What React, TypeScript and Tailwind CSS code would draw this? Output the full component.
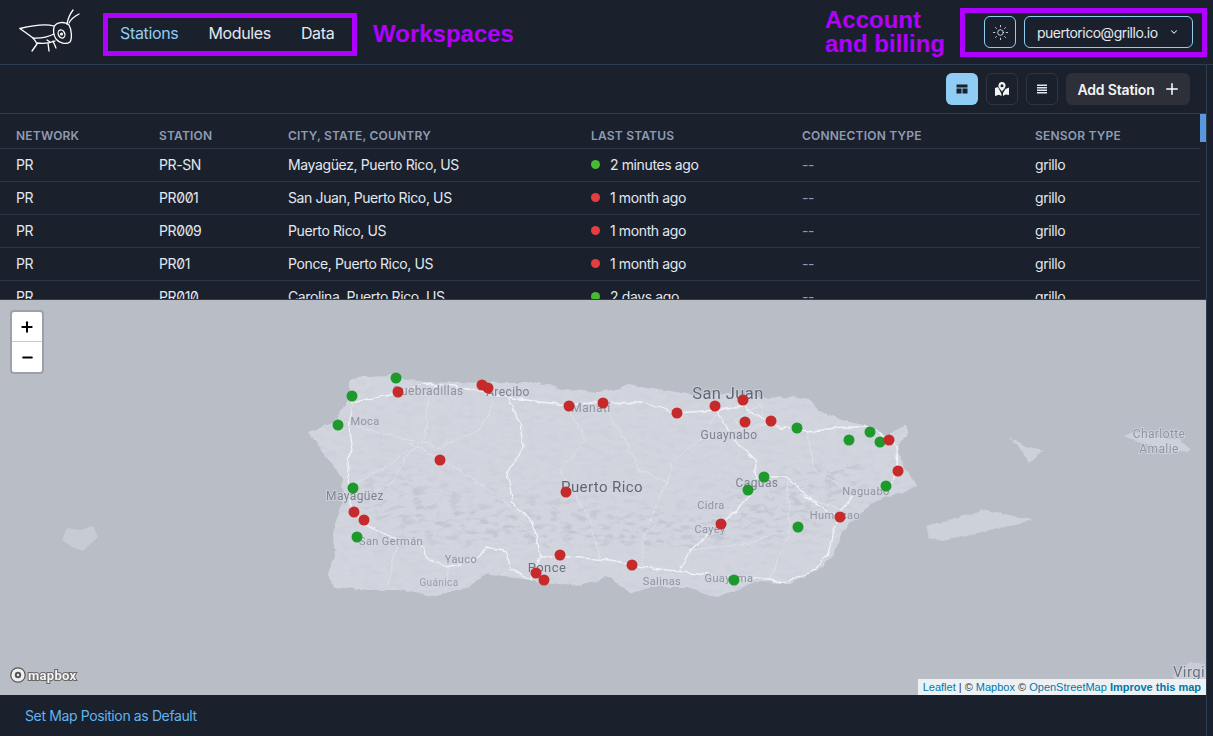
import { Plus, ChevronDown, Sun, Minus } from "lucide-react";

const rows = [
  { net: "PR", station: "PR-SN", city: "Mayagüez, Puerto Rico, US", status: "2 minutes ago", ok: true },
  { net: "PR", station: "PR001", city: "San Juan, Puerto Rico, US", status: "1 month ago", ok: false },
  { net: "PR", station: "PR009", city: "Puerto Rico, US", status: "1 month ago", ok: false },
  { net: "PR", station: "PR01", city: "Ponce, Puerto Rico, US", status: "1 month ago", ok: false },
  { net: "PR", station: "PR010", city: "Carolina, Puerto Rico, US", status: "2 days ago", ok: true },
];

const island =
  "M350 382 L358 377 L367 376 L393 375 L412 380 L433 383 L458 382 L480 383 L513 383 L540 383 L567 390 L600 392 L620 388 L627 384 L653 388 L693 395 L730 393 L767 398 L790 397 L810 400 L823 413 L845 421 L863 425 L887 435 L907 425 L908 433 L897 447 L903 467 L917 485 L903 493 L883 497 L863 510 L843 530 L833 557 L823 567 L790 583 L757 582 L735 590 L717 597 L687 587 L653 587 L630 593 L610 577 L577 587 L533 580 L507 577 L487 573 L470 587 L433 597 L400 590 L367 590 L333 587 L328 573 L335 557 L333 533 L343 503 L342 477 L327 457 L308 432 L333 423 L350 397 Z";

const mainRoads = [
  "M352 403 L397 392 L423 384 L453 386 L487 393 L507 397 L540 402 L567 405 L600 402 L643 403 L677 413 L717 410 L743 407 L780 427 L807 432 L843 427 L873 427 L897 447 L898 470 L887 487 L853 495 L842 510 L833 533 L827 557 L810 573 L783 582 L757 578 L720 577 L683 572 L643 567 L610 560 L567 557 L542 557 L530 580 L510 568 L507 552 L487 548 L477 560 L447 567 L428 558 L420 543 L397 540 L363 523 L350 507 L350 487 L347 463 L352 450 L349 433 L352 403",
  "M717 410 L733 440 L755 460 L757 477 L748 498 L723 523 L690 550 L680 570",
  "M757 477 L787 477 L807 497 L837 517",
  "M507 397 L520 423 L523 447 L507 473 L513 503 L533 523 L542 557",
];

const minorRoads = [
  "M350 423 L380 433 L440 447 L480 430 L493 403",
  "M410 443 L460 470 L493 493 L533 523",
  "M717 413 L700 440 L673 460 L667 483 L653 513 L643 543 L643 567",
  "M360 500 L395 480 L412 447",
  "M567 405 L585 440 L560 470 L590 520 L600 558",
  "M600 402 L625 440 L640 470 L667 483",
  "M700 440 L760 425 L780 427",
  "M787 477 L790 530 L770 580",
  "M842 510 L800 495 M807 432 L815 470 L853 495",
  "M397 540 L388 585 M450 567 L445 590",
  "M690 550 L740 545 L790 530",
  "M735 420 L760 405 L765 425 L745 432 L735 420",
  "M350 403 L370 383 M430 385 L425 440 L380 470 L350 487",
];

const labels: [string, number, number, number, string][] = [
  ["Quebradillas", 428, 395, 12, "#8e94a2"],
  ["Arecibo", 508, 396, 12, "#7d8391"],
  ["Manatí", 591, 412, 12, "#8e94a2"],
  ["San Juan", 728, 399, 16.5, "#5f6676"],
  ["Moca", 365, 425, 11, "#8e94a2"],
  ["Guaynabo", 729, 439, 12, "#7d8391"],
  ["Mayagüez", 355, 500, 12, "#7d8391"],
  ["Puerto Rico", 602, 492, 15, "#5f6676"],
  ["Caguas", 757, 487, 12, "#7d8391"],
  ["Naguabo", 866, 495, 11, "#8e94a2"],
  ["Cidra", 711, 509, 11, "#8e94a2"],
  ["Humacao", 835, 519, 11, "#8e94a2"],
  ["Cayey", 710, 533, 11, "#8e94a2"],
  ["San Germán", 391, 545, 11, "#8e94a2"],
  ["Yauco", 461, 563, 11, "#8e94a2"],
  ["Ponce", 547, 572, 13, "#6b7280"],
  ["Guánica", 439, 586, 10, "#9aa0ac"],
  ["Salinas", 662, 585, 11, "#8e94a2"],
  ["Guayama", 729, 582, 11, "#8e94a2"],
  ["Charlotte", 1159, 438, 12, "#8e94a2"],
  ["Amalie", 1159, 453, 12, "#8e94a2"],
  ["Virgi", 1189, 677, 15, "#6b7280"],
];

const green = [
  [396, 378], [352, 396], [338, 425], [353, 488], [357, 537], [797, 428], [849, 440], [870, 432],
  [880, 442], [886, 486], [764, 477], [748, 490], [798, 527], [734, 580],
];
const red = [
  [398, 392], [482, 385], [488, 388], [569, 406], [603, 403], [440, 460], [566, 492], [354, 512],
  [364, 520], [560, 555], [536, 573], [544, 580], [632, 565], [677, 413], [715, 406], [743, 400],
  [745, 422], [771, 421], [889, 440], [898, 471], [840, 517], [721, 524],
];

function Logo() {
  return (
    <svg className="overflow-visible" width="62" height="44" viewBox="18 10 62 44" fill="none" stroke="#fff" strokeWidth="1.3" strokeLinecap="round" strokeLinejoin="round">
      <path d="M20 28.5 C30 26 44 23 54 26" />
      <path d="M20 28.5 C25 32 29 35 33 38 C40 38.5 48 37 54 34" />
      <path d="M54 27 C56 22 65 21 69 25 C72 30 72 39 70 42 C66 45 59 43 56 39 C54 36 53 31 54 27 Z" />
      <ellipse cx="61.5" cy="34" rx="3.2" ry="4.2" transform="rotate(-25 61.5 34)" />
      <circle cx="61.5" cy="34" r="0.9" />
      <path d="M67 24 C68 18 70 14 73 10 M69 23 C71 19 75 16 79 14" />
      <path d="M33 38 C35 40 36 42 37 44 L32 51 M37 43 C43 44 50 43 55 41 M48 43 L49 51 M53 41 L56 48 M47 40 L50 42" />
    </svg>
  );
}

function MapIcon() {
  return (
    <svg width="16" height="16" viewBox="0 0 16 16" fill="#f3f4f6">
      <path d="M8 1 C5.8 1 4.4 2.7 4.4 4.6 C4.4 6.6 6.6 9 8 10.4 C9.4 9 11.6 6.6 11.6 4.6 C11.6 2.7 10.2 1 8 1 Z M8 3.2 A1.5 1.5 0 1 1 8 6.2 A1.5 1.5 0 0 1 8 3.2 Z" fillRule="evenodd" />
      <path d="M1 7 L4 6 L7.5 13 L7.5 15 L5 13.8 L1 15 Z" />
      <path d="M9 15 L9 12 L11.5 8 L15 6.5 L15 14 L11.5 13.5 Z" />
    </svg>
  );
}

function LeafletMap() {
  return (
    <div className="relative flex-1 overflow-hidden bg-[#b9bdc6]">
      <svg className="absolute left-0 top-[-300px]" width="1206" height="736" viewBox="0 0 1206 736">
        <defs>
          <filter id="terrain" x="0" y="0" width="100%" height="100%">
            <feTurbulence type="fractalNoise" baseFrequency="0.08 0.2" numOctaves="5" seed="11" />
            <feColorMatrix values="0 0 0 0 0.50  0 0 0 0 0.53  0 0 0 0 0.60  4 0 0 0 -1.95" />
          </filter>
          <filter id="coast" x="-5%" y="-5%" width="110%" height="110%">
            <feTurbulence type="fractalNoise" baseFrequency="0.09" numOctaves="3" seed="4" result="n" />
            <feDisplacementMap in="SourceGraphic" in2="n" scale="6" xChannelSelector="R" yChannelSelector="G" />
          </filter>
          <filter id="wide">
            <feGaussianBlur stdDeviation="14" />
          </filter>
          <mask id="relief" maskUnits="userSpaceOnUse" x="290" y="360" width="640" height="250">
            <rect x="290" y="360" width="640" height="250" fill="#303030" />
            <path d="M370 490 L470 525 L600 530 L700 540 L790 505 L860 470" fill="none" stroke="#ccc" strokeWidth="46" filter="url(#wide)" />
          </mask>
          <clipPath id="pr">
            <path d={island} />
          </clipPath>
        </defs>
        <g filter="url(#coast)">
          <path d={island} fill="#d2d5de" />
          <g clipPath="url(#pr)">
            <g mask="url(#relief)">
              <rect x="290" y="360" width="640" height="250" filter="url(#terrain)" />
            </g>
            <g fill="none" stroke="#e6e8ed" strokeWidth="0.8" opacity="0.75">
              {minorRoads.map((d) => (
                <path key={d} d={d} />
              ))}
            </g>
            <g fill="none" stroke="#f1f2f5" strokeWidth="1.3" strokeLinejoin="round">
              {mainRoads.map((d) => (
                <path key={d} d={d} />
              ))}
            </g>
          </g>
          <path d="M925 527 L960 517 L987 510 L1013 517 L1035 520 L1010 525 L977 533 L943 540 L928 537 Z" fill="#cdd1da" />
          <path d="M1010 438 L1025 446 L1043 450 L1030 462 L1017 447 Z" fill="#cdd1da" />
          <path d="M1122 437 L1133 432 L1173 437 L1192 450 L1167 453 L1140 442 Z" fill="#cdd1da" />
          <path d="M1172 676 L1190 662 L1206 664 L1206 690 L1180 690 Z" fill="#c9ccd5" />
        </g>
        <path d="M67 528 L80 530 L93 526 L98 537 L83 551 L72 547 L62 540 Z" fill="#c7cbd4" />
        <g fontFamily="Roboto, sans-serif" textAnchor="middle" stroke="#d2d5de" strokeWidth="1.5" paintOrder="stroke" letterSpacing="0.4">
          {labels.map(([name, x, y, size, color]) => (
            <text key={name} x={x} y={y} fontSize={size} fill={color}>
              {name}
            </text>
          ))}
        </g>
        {green.map(([x, y]) => (
          <circle key={`g${x}-${y}`} cx={x} cy={y} r="5.5" fill="#1e9a2d" />
        ))}
        {red.map(([x, y]) => (
          <circle key={`r${x}-${y}`} cx={x} cy={y} r="5.5" fill="#c72a2a" />
        ))}
      </svg>

      <div className="absolute left-[10px] top-[10px] flex w-[34px] flex-col overflow-hidden rounded-[4px] border-2 border-[#9da0a6] bg-white text-black">
        <div className="flex h-[30px] items-center justify-center border-b border-[#ccc]">
          <Plus size={16} strokeWidth={3} />
        </div>
        <div className="flex h-[30px] items-center justify-center">
          <Minus size={15} strokeWidth={3} />
        </div>
      </div>

      <div className="absolute bottom-[12px] left-[10px] flex items-center gap-[2px]">
        <svg width="16" height="16" viewBox="0 0 16 16">
          <circle cx="8" cy="8" r="7.2" fill="#efefef" stroke="#555" strokeWidth="1.2" />
          <circle cx="8" cy="8" r="3.2" fill="#555" />
          <circle cx="8" cy="8" r="1.2" fill="#efefef" />
        </svg>
        <span className="font-['Roboto',sans-serif] text-[13px] font-bold leading-none tracking-[0.3px] text-[#f4f4f4] [-webkit-text-stroke:2px_#666] [paint-order:stroke_fill]">
          mapbox
        </span>
      </div>

      <div className="absolute bottom-0 right-0 h-4 bg-[#eef1f4] px-[5px] font-['Liberation_Sans',sans-serif] text-[11px] leading-4 text-[#333]">
        <span className="text-[#0078a8]">Leaflet</span> | © <span className="text-[#0078a8]">Mapbox</span> ©{" "}
        <span className="text-[#0078a8]">OpenStreetMap</span>{" "}
        <span className="font-bold text-[#0078a8]">Improve this map</span>
      </div>
    </div>
  );
}

export default function App() {
  return (
    <div className="flex h-[736px] w-[1213px] flex-col overflow-hidden bg-[#1a202c] font-['Inter',sans-serif] text-[#e2e8f0]">
      <header className="flex h-[65px] shrink-0 items-center border-b border-[#2d3d4f] pl-[18px] pr-[6px]">
        <Logo />
        <nav className="ml-[23px] mt-[4px] flex h-[43px] w-[254px] items-center gap-[30px] border-[5px] border-[#b000ff] pb-[3px] pl-[12px] text-[16px] tracking-[-0.35px]">
          <span className="text-[#90cdf4]">Stations</span>
          <span>Modules</span>
          <span>Data</span>
        </nav>
        <span className="ml-[16px] mt-[3px] font-['Liberation_Sans',sans-serif] text-[24px] font-bold text-[#b000ff]">Workspaces</span>
        <div className="ml-auto mr-[15px] font-['Liberation_Sans',sans-serif] text-[24px] font-bold leading-[24px] text-[#b000ff]">
          Account
          <br />
          and billing
        </div>
        <div className="flex h-[49px] w-[247px] items-center gap-[8px] border-[5px] border-[#b000ff] pl-[19px]">
          <div className="flex h-8 w-8 items-center justify-center rounded-md border border-[#90cdf4]">
            <Sun size={17} strokeWidth={1.2} />
          </div>
          <div className="flex h-8 w-[169px] items-center gap-[11px] rounded-md border border-[#90cdf4] pl-[12px] text-[14px] tracking-[-0.5px]">
            puertorico@grillo.io
            <ChevronDown size={10} strokeWidth={2.5} />
          </div>
        </div>
      </header>

      <div className="flex min-h-0 flex-1">
        <div className="flex min-w-0 flex-1 flex-col border-r border-[#2d3d4f]">
          <div className="flex h-[49px] shrink-0 items-center justify-end gap-2 border-b border-[#2d3d4f] pr-[16px]">
            <div className="flex h-8 w-8 items-center justify-center rounded-md bg-[#90cdf4] text-[#1a202c]">
              <svg width="12" height="10" viewBox="0 0 12 10" fill="currentColor">
                <path d="M0.5 0.5 H11.5 V3.5 H0.5 Z M0.5 4.5 H5.5 V9.5 H0.5 Z M6.5 4.5 H11.5 V9.5 H6.5 Z" />
              </svg>
            </div>
            <div className="flex h-8 w-8 items-center justify-center rounded-md border border-[#2f3542]">
              <MapIcon />
            </div>
            <div className="flex h-8 w-8 items-center justify-center rounded-md border border-[#2f3542]">
              <svg width="10" height="10" viewBox="0 0 10 10" fill="#e2e8f0">
                <path d="M0 0.5 H10 V2 H0 Z M0 3 H10 V4.5 H0 Z M0 5.5 H10 V7 H0 Z M0 8 H10 V9.5 H0 Z" />
              </svg>
            </div>
            <div className="flex h-8 w-[124px] items-center justify-center gap-[8px] rounded-md bg-[#2d3038] pl-[2px] text-[14px] font-semibold tracking-[-0.15px] text-[#f3f4f6]">
              Add Station
              <Plus size={18} strokeWidth={2} className="text-white" />
            </div>
          </div>

          <div className="relative h-[186px] shrink-0 overflow-hidden border-b border-[#2d3d4f]">
            <div className="absolute right-0 top-0 h-[28px] w-[6px] bg-[#5a97dc]" />
            <div className="mr-[6px]">
              <div className="grid h-[35px] grid-cols-[143px_129px_303px_211px_233px_1fr] items-center border-b border-[#2d3748] pl-[16px] pt-[10px] text-[12px] font-semibold tracking-[0.2px] text-[#8f9bb3]">
                <span>NETWORK</span>
                <span>STATION</span>
                <span>CITY, STATE, COUNTRY</span>
                <span>LAST STATUS</span>
                <span>CONNECTION TYPE</span>
                <span>SENSOR TYPE</span>
              </div>
              {rows.map((r) => (
                <div
                  key={r.station}
                  className="grid h-[33px] grid-cols-[143px_129px_303px_211px_233px_1fr] items-center border-b border-[#2d3748] pb-[1px] pl-[16px] text-[14px] tracking-[-0.38px]"
                >
                  <span>{r.net}</span>
                  <span className="slashed-zero">{r.station}</span>
                  <span>{r.city}</span>
                  <span className="flex items-center gap-[10px]">
                    <span className={`h-[9px] w-[9px] rounded-full ${r.ok ? "bg-[#48bb32]" : "bg-[#e53e3e]"}`} />
                    {r.status}
                  </span>
                  <span className="text-[#8f9bb3]">--</span>
                  <span>grillo</span>
                </div>
              ))}
            </div>
          </div>

          <LeafletMap />

          <div className="flex h-[41px] shrink-0 items-center pl-[25px] text-[14px] tracking-[-0.38px] text-[#63b3ed]">
            Set Map Position as Default
          </div>
        </div>
        <div className="w-[6px] shrink-0" />
      </div>
    </div>
  );
}
